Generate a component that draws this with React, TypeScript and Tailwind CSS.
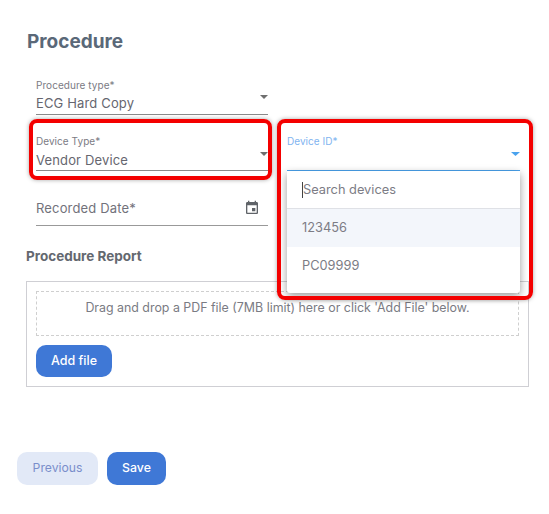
function Caret({ color, top, width = 8 }: { color: string; top: string; width?: number }) {
  return (
    <svg width={width} height="4" viewBox="0 0 10 5" preserveAspectRatio="none" className={`absolute right-0 ${top}`} style={{ color }}>
      <path d="M0 0h10L5 5z" fill="currentColor" />
    </svg>
  );
}

function Select({ label, value, top, gap }: { label: string; value: string; top: string; gap: string }) {
  return (
    <div className="relative h-[56px] pt-[3px]">
      <div className="h-[36px] border-b border-[#8a8a8a] relative">
        <div className="text-[10px] leading-[13px] tracking-[0.05px] text-[#7b7b84]">{label}</div>
        <div className={`${gap} text-[13px] leading-[20px] tracking-[0.15px] text-[#66666f]`}>{value}</div>
        <Caret color="#6f6f6f" top={top} />
      </div>
    </div>
  );
}

export default function App() {
  return (
    <div className="relative w-[549px] h-[514px] bg-white overflow-hidden" style={{ fontFamily: "Inter, 'Liberation Sans', sans-serif" }}>
      <div className="pl-[26px] pr-[20px] pt-[30px]">
        <h1 className="text-[19px] leading-[24px] font-bold text-[#5a6878] pl-[1px]">Procedure</h1>
        <div className="mt-[22px] pl-[10px] pr-[9px] grid grid-cols-[232px_233px] gap-x-[19px]">
          <Select label="Procedure type*" value="ECG Hard Copy" top="top-[16px]" gap="mt-[1px]" />
          <div />
          <Select label="Device Type*" value="Vendor Device" top="top-[17px]" gap="mt-[2px]" />
          <div className="relative h-[56px] pt-[3px]">
            <div className="h-[36px] border-b border-[#4aa3ee] relative">
              <div className="text-[10px] leading-[13px] tracking-[0.05px] text-[#7fb4f0]">Device ID*</div>
              <Caret color="#4aa3ee" top="top-[17px]" width={9} />
            </div>
          </div>
          <div className="relative h-[55px] pt-[3px]">
            <div className="h-[35px] border-b border-[#999] relative flex items-start justify-between pt-[7px] pr-[8px]">
              <span className="text-[13px] leading-[20px] tracking-[0.15px] text-[#72727b]">Recorded Date*</span>
              <svg width="16" height="16" viewBox="0 0 24 24" fill="#5f6368" className="mt-[2px]">
                <path d="M17 12h-5v5h5v-5zM16 1v2H8V1H6v2H5c-1.11 0-1.99.9-1.99 2L3 19c0 1.1.89 2 2 2h14c1.1 0 2-.9 2-2V5c0-1.1-.9-2-2-2h-1V1h-2zm3 18H5V8h14v11z" />
              </svg>
            </div>
          </div>
        </div>
        <h2 className="mt-[3px] text-[13.5px] leading-[20px] font-bold text-[#63686f]">Procedure Report</h2>
        <div className="mt-[15px] w-[503px] h-[106px] border border-[#cfcfd4] pt-[9px] px-[9px]">
          <div className="h-[45px] border border-dashed border-[#cfcfcf] pt-[6px] text-center text-[12.4px] leading-[20px] text-[#7a7b83]">
            Drag and drop a PDF file (7MB limit) here or click 'Add File' below.
          </div>
          <button className="mt-[9px] w-[76px] h-[32px] rounded-[10px] bg-[#3f78d6] text-white text-[12.5px] font-medium">Add file</button>
        </div>
      </div>
      <div className="mt-[65px] pl-[17px] flex gap-[9px]">
        <button className="w-[81px] h-[33px] rounded-[10px] bg-[#e2e9f7] text-[#7a8ecb] text-[12.2px]">Previous</button>
        <button className="w-[59px] h-[33px] rounded-[10px] bg-[#3f78d6] text-white text-[12.3px] font-medium">Save</button>
      </div>

      <div className="absolute left-[287px] top-[171px] w-[233px] h-[122px] bg-white rounded-b-[3px] shadow-[0_3px_8px_rgba(0,0,0,0.4)] text-[12.8px] text-[#7c7c85]">
        <div className="h-[38px] flex items-center pl-[15px] border-b border-[#dfe1e6]">
          <span className="border-l border-[#444] leading-[16px]">Search devices</span>
        </div>
        <div className="h-[38px] flex items-center pl-[15px] bg-[#f3f6fb]">123456</div>
        <div className="h-[38px] flex items-center pl-[15px]">PC09999</div>
      </div>

      <div className="absolute left-[29px] top-[119px] w-[243px] h-[61px] rounded-lg border-4 border-[#f40000] shadow-[0_0_4px_rgba(0,0,0,0.35)]" />
      <div className="absolute left-[277px] top-[119px] w-[256px] h-[181px] rounded-lg border-4 border-[#f40000] shadow-[0_0_4px_rgba(0,0,0,0.35)]" />
    </div>
  );
}
